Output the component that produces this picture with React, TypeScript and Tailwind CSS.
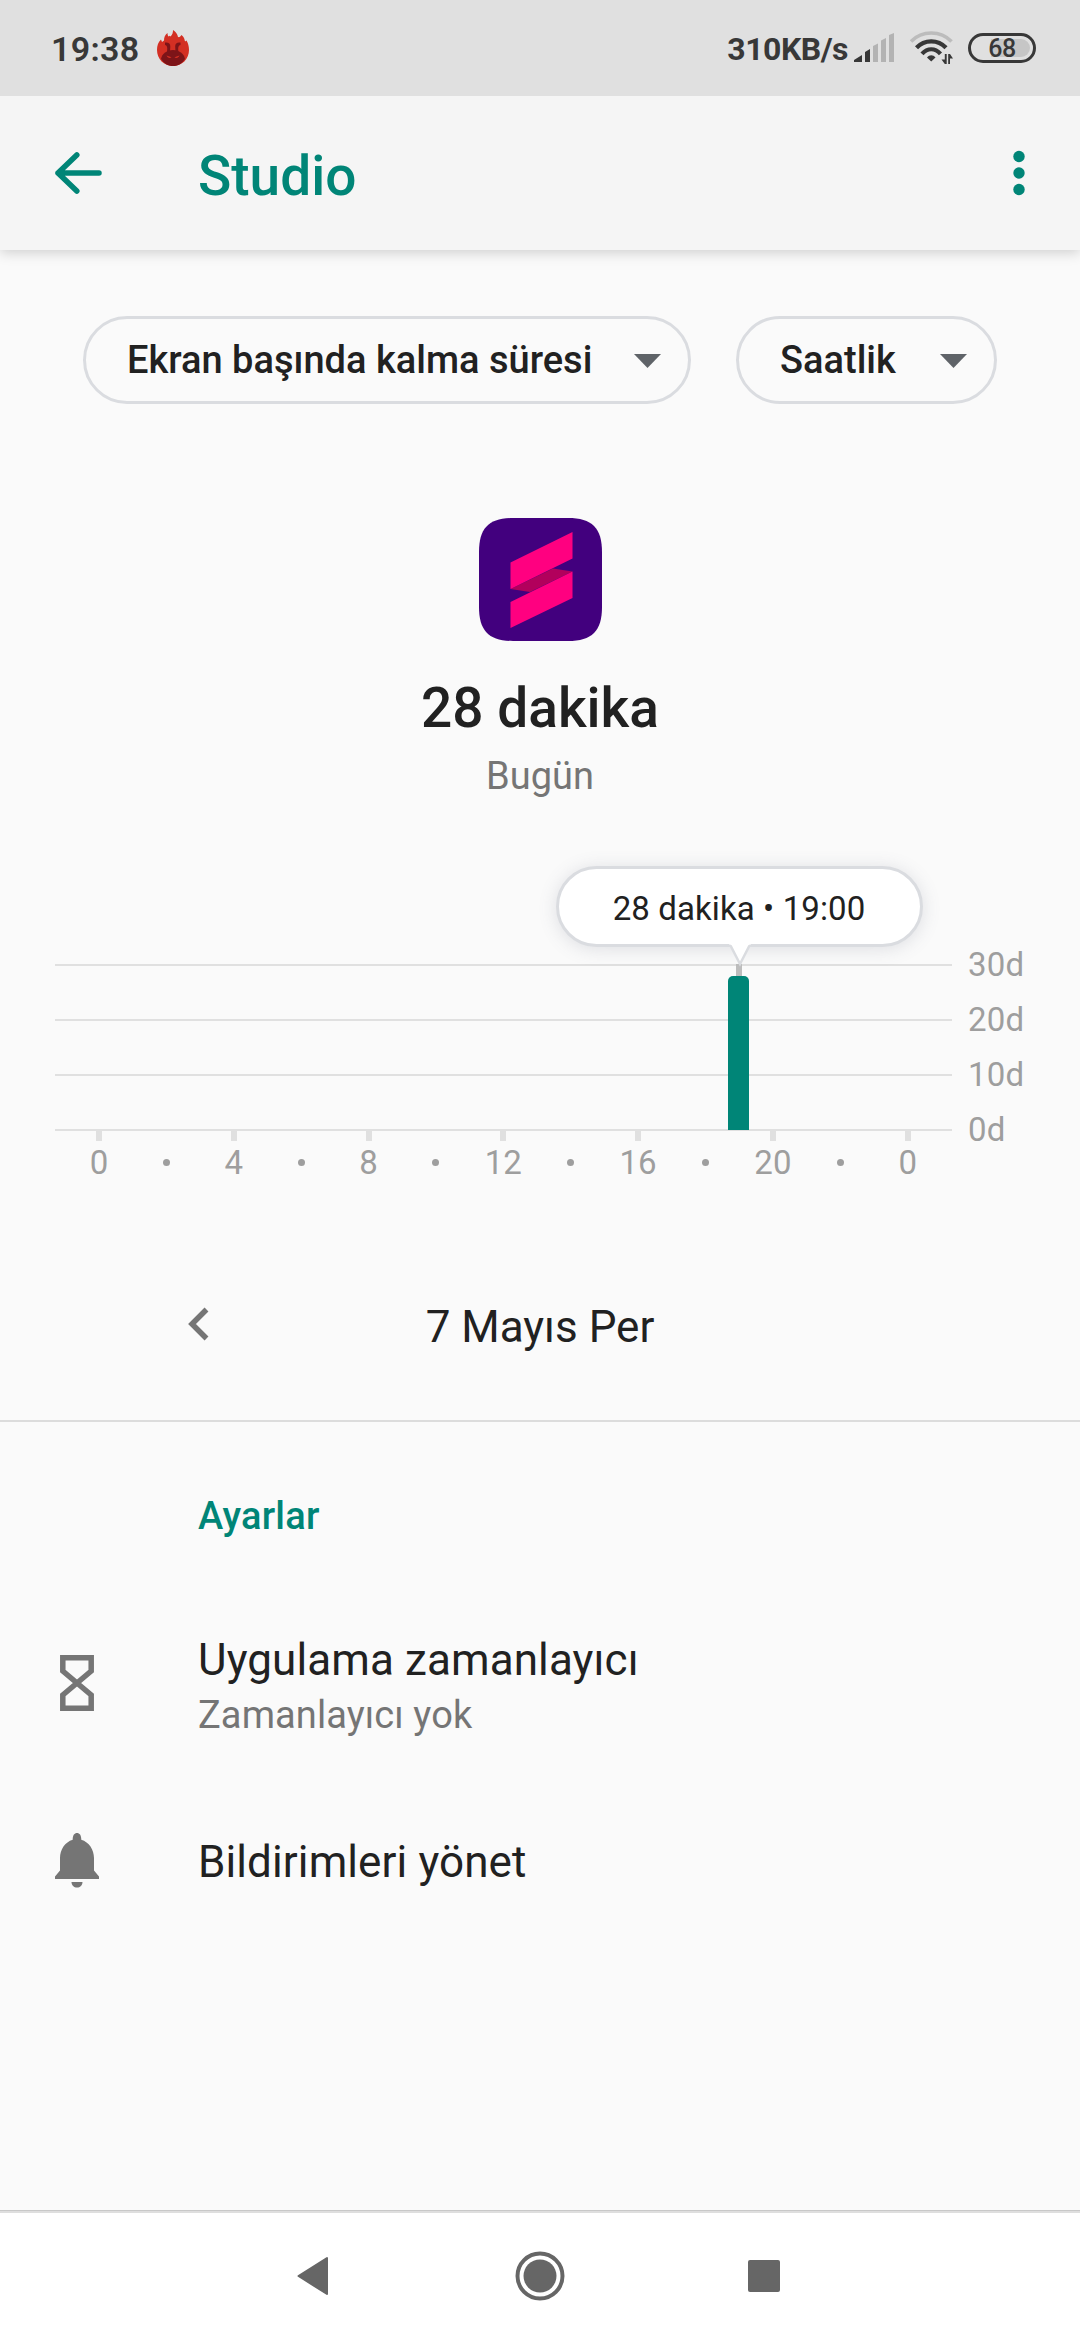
import type { ReactNode } from "react";

function Flame() {
  return (
    <svg className="h-[36px] w-[32px]" viewBox="0 0 32 36">
      <path
        fill="#d32f23"
        d="M16 0C19 2 20.500 4 21 7C22.500 7.500 23.500 6.500 24.500 5C27 7 27.500 9 28 11.500L29.500 10.500C31 13 32 16 32 20C32 29 25 36 16 36C7 36 0 29 0 20C0 16 1 12 4 9.500L5 12L7 10.500C7 7 8 5 10.500 3C10.500 5 11 6.500 12 6.500C12.500 5 13 6.500 13.500 6.500C15.500 4.500 16 2.500 16 0Z"
      />
      <path fill="#7d1418" d="M4 29C5 23.500 10 20 16 20S27 23.500 28 29C25 33.500 21 36 16 36S7 33.500 4 29Z" />
      <path fill="#7d1418" d="M8 12.500C11 12 13.500 13 13.300 16.500L13 22H10C10.500 18 10.500 15.500 8 15Z" />
      <path fill="#7d1418" d="M23.500 12.500C20.500 12 18 13 18.200 16.500L18.500 22H21.500C21 18 21 15.500 23.500 15Z" />
      <path fill="#d32f23" d="M9.500 25.500L14.500 27.300C13 28.500 10.500 28 9.500 25.500ZM22.500 25.500L17.500 27.300C19 28.500 21.500 28 22.500 25.500Z" />
    </svg>
  );
}

function Signal() {
  return (
    <svg className="ml-[6px] h-[30px] w-[40px]" viewBox="0 0 40 30">
      <path fill="#383838" d="M0 29V27L8 22V29ZM11 29V19L16 16V29Z" />
      <path fill="#b3b3b3" d="M19 29V13L24 10.500V29ZM27 29V7.500L32 5V29ZM35 29V2L40 0V29Z" />
    </svg>
  );
}

function Wifi() {
  return (
    <svg className="ml-[16px] h-[34px] w-[43px]" viewBox="0 0 43 34" fill="none">
      <path stroke="#bcbcbc" strokeWidth="3.600" d="M1 10.500C12 -.8 30.500 -.8 41.500 10.500" />
      <path stroke="#383838" strokeWidth="4.200" d="M6.500 16.800C14.500 8.200 28 8.200 36 16.800" />
      <path stroke="#383838" strokeWidth="4.200" d="M12 22.800C17.500 16.700 25 16.700 30.500 22.800" />
      <path fill="#383838" d="M17 26.500C19.500 23.500 23 23.500 25.500 26.500L21.200 30.500Z" />
      <path fill="#383838" d="M34.800 23H36.700V33H34.800L31.500 28.500H34.800ZM38.200 23H40L43 27.500H40V33H38.200Z" />
    </svg>
  );
}

function StatusBar() {
  return (
    <div className="relative z-10 flex h-[96px] items-center bg-[#e0e0e0] pr-[44px] pl-[51px] font-semibold text-[#383838]">
      <span className="pt-[2px] text-[34px] leading-[40px] tracking-[0.3px]">19:38</span>
      <div className="ml-[18px]">
        <Flame />
      </div>
      <div className="flex-1" />
      <span className="pt-[2px] text-[32px] leading-[40px] font-bold tracking-[-0.5px]">310KB/s</span>
      <Signal />
      <Wifi />
      <div className="relative ml-[15px] flex h-[30px] w-[68px] items-center justify-center rounded-full border-[3px] border-[#383838] text-[25px] leading-none font-medium tracking-[-0.5px]">
        <div className="absolute top-[3px] right-[3px] h-[18px] w-[39px] rounded-r-full bg-[#c6c6c6]" />
        <span className="relative">68</span>
      </div>
    </div>
  );
}

function AppBar() {
  return (
    <header className="relative flex h-[154px] items-center bg-[#f5f5f5] pl-[54px] pr-[55px] text-[#008577] shadow-[0_3px_12px_rgba(0,0,0,0.17)]">
      <svg className="h-[44px] w-[48px]" viewBox="0 0 48 44" fill="none" stroke="#008577" strokeWidth="5.500" strokeLinecap="round" strokeLinejoin="round">
        <path d="M45 22H4M22.800 4L4 22L22.800 40" />
      </svg>
      <h1 className="ml-[96px] pt-[6px] text-[55px] leading-[64px] font-medium">Studio</h1>
      <svg className="ml-auto h-[46px] w-[12px]" viewBox="0 0 12 46" fill="#008577">
        <circle cx="6" cy="6.500" r="5.700" />
        <circle cx="6" cy="23" r="5.700" />
        <circle cx="6" cy="39.500" r="5.700" />
      </svg>
    </header>
  );
}

function Chip({ label, className }: { label: string; className: string }) {
  return (
    <button
      className={`flex h-[88px] items-center justify-between rounded-full border-[3px] border-[#dadce0] pr-[27px] pl-[41px] text-[38px] leading-[44px] font-medium text-[#212121] ${className}`}
    >
      <span className="whitespace-nowrap">{label}</span>
      <svg className="mt-[2px] h-[14px] w-[27px]" viewBox="0 0 27 14">
        <path fill="#5f6368" d="M0 0H27L13.500 14Z" />
      </svg>
    </button>
  );
}

function AppSummary() {
  return (
    <section className="flex flex-col items-center pt-[114px]">
      <svg className="h-[123px] w-[123px]" viewBox="0 0 123 123">
        <path
          fill="#42007e"
          d="M34 0H89C113 0 123 10 123 34V89C123 113 113 123 89 123H34C10 123 0 113 0 89V34C0 10 10 0 34 0Z"
        />
        <path fill="#b2005c" d="M31.500 71L74 50.500L93.500 53.500L51 74Z" />
        <path fill="#ff0080" d="M31.500 44.500L93.500 14V40.500L31.500 71ZM31.500 84L93.500 53.500V80L31.500 110Z" />
      </svg>
      <div className="mt-[35px] text-[55px] leading-[64px] font-medium text-[#212121]">28 dakika</div>
      <div className="mt-[14px] text-[38px] leading-[44px] text-[#757575]">Bugün</div>
    </section>
  );
}

const gridLabels = ["30d", "20d", "10d", "0d"];
const hourLabels = ["0", "", "4", "", "8", "", "12", "", "16", "", "20", "", "0"];

function UsageChart() {
  return (
    <section className="relative mt-[140px]">
      <div className="flex flex-col gap-px">
        {gridLabels.map((label) => (
          <div key={label} className="flex h-[54px] items-center pl-[55px]">
            <div className="h-[2px] w-[897px] bg-[#e0e0e0]" />
            <span className="ml-[16px] text-[33px] leading-[40px] tracking-[0.2px] text-[#9e9e9e]">{label}</span>
          </div>
        ))}
      </div>
      <div className="-mt-[26px] flex pl-[65.3px]">
        {hourLabels.map((hour, i) => (
          <div key={i} className="flex w-[67.4px] flex-col items-center text-[33px] leading-[40px] text-[#9e9e9e]">
            <div className={hour ? "h-[10px] w-[6px] bg-[#e0e0e0]" : "h-[10px] w-[6px]"} />
            <div className="mt-[2px] flex h-[40px] items-center justify-center">
              {hour ? <span>{hour}</span> : <div className="mb-[2px] size-[7px] rounded-full bg-[#9e9e9e]" />}
            </div>
          </div>
        ))}
      </div>
      <div className="absolute top-[26px] left-[736px] h-[14px] w-[6px] bg-[#bdbdbd]" />
      <div className="absolute top-[38px] left-[728px] h-[154px] w-[21px] rounded-t-[5px] bg-[#008577]" />
      <div className="absolute -top-[72px] left-[555.5px] flex h-[81px] w-[367px] items-center justify-center rounded-full border-[3px] border-[#dadce0] bg-white pt-[4px] text-[33px] leading-[40px] tracking-[0.1px] whitespace-nowrap text-[#212121] shadow-[0_2px_18px_rgba(95,99,120,0.18)]">
        28 dakika • 19:00
        <svg className="absolute top-[74px] left-[170.500px] h-[24px] w-[22px]" viewBox="0 0 22 24">
          <path fill="#fff" d="M0 0H22V1.500H20.500L11 21L1.500 1.500H0Z" />
          <path fill="none" stroke="#dadce0" strokeWidth="2.500" d="M1.500 2.500L11 21L20.500 2.500" />
        </svg>
      </div>
    </section>
  );
}

function DateNav() {
  return (
    <section className="relative mt-[103px] flex h-[136px] justify-center border-b-2 border-[#dcdcdc] pt-[15px]">
      <svg className="absolute top-[21px] left-[188px] h-[34px] w-[21px]" viewBox="0 0 21 34" fill="none" stroke="#757575" strokeWidth="5.500">
        <path d="M18.500 2.500L4 17L18.500 31.500" />
      </svg>
      <div className="h-[52px] text-[44px] leading-[52px] text-[#212121]">7 Mayıs Per</div>
    </section>
  );
}

function SettingRow({ icon, title, subtitle, className }: { icon: ReactNode; title: string; subtitle?: string; className: string }) {
  return (
    <div className={`flex items-center pl-[55px] ${className}`}>
      <div className="flex w-[44px] justify-center">{icon}</div>
      <div className="ml-[99px]">
        <div className="text-[44px] leading-[52px] tracking-[0.1px] text-[#212121]">{title}</div>
        {subtitle && <div className="mt-[6px] text-[38px] leading-[46px] tracking-[0.1px] text-[#757575]">{subtitle}</div>}
      </div>
    </div>
  );
}

function Settings() {
  return (
    <section>
      <h2 className="mt-[71px] pl-[198px] text-[38px] leading-[46px] font-medium tracking-[0.2px] text-[#008577]">Ayarlar</h2>
      <SettingRow
        className="mt-[95px] h-[104px]"
        title="Uygulama zamanlayıcı"
        subtitle="Zamanlayıcı yok"
        icon={
          <svg className="mt-[-6px] h-[56px] w-[34px]" viewBox="0 0 34 56" fill="none" stroke="#757575" strokeWidth="5.500">
            <path d="M2.800 2.800H31.200V16L17 28L2.800 16ZM17 28L31.200 40V53.200H2.800V40Z" />
          </svg>
        }
      />
      <SettingRow
        className="mt-[93px] h-[62px]"
        title="Bildirimleri yönet"
        icon={
          <svg className="-mt-[4px] h-[55px] w-[44px]" viewBox="0 0 44 55" fill="#757575">
            <path d="M22 0C24.500 0 26.300 2 26.300 6.700C34 9 39 16.500 39 25V37.500L44 43.500V46H0V43.500L5 37.500V25C5 16.500 10 9 17.700 6.700C17.700 2 19.500 0 22 0Z" />
            <path d="M16.500 49H27.500C27.500 52.500 25 54.500 22 54.500S16.500 52.500 16.500 49Z" />
          </svg>
        }
      />
    </section>
  );
}

function NavBar() {
  return (
    <nav className="mt-auto flex h-[130px] flex-col border-t border-[#c8c8c8] bg-white">
      <div className="h-[2px] bg-[#dedede]" />
      <div className="flex h-[126px] items-center justify-between pr-[300px] pl-[297px]">
        <svg className="h-[42px] w-[32px]" viewBox="0 0 32 42">
          <path fill="#666" stroke="#666" strokeWidth="2" strokeLinejoin="round" d="M1.500 21L30 3V39Z" />
        </svg>
        <svg className="ml-[3px] h-[50px] w-[50px]" viewBox="0 0 50 50">
          <circle cx="25" cy="25" r="22.500" fill="none" stroke="#666" strokeWidth="4" />
          <circle cx="25" cy="25" r="16.500" fill="#666" />
        </svg>
        <div className="h-[32px] w-[32px] rounded-[2px] bg-[#666]" />
      </div>
    </nav>
  );
}

export default function App() {
  return (
    <div className="flex h-[2340px] w-[1080px] flex-col overflow-hidden bg-[#fafafa] font-['Roboto',sans-serif]">
      <StatusBar />
      <AppBar />
      <div className="flex justify-center gap-[45px] pt-[66px]">
        <Chip className="w-[608px]" label="Ekran başında kalma süresi" />
        <Chip className="w-[261px]" label="Saatlik" />
      </div>
      <AppSummary />
      <UsageChart />
      <DateNav />
      <Settings />
      <NavBar />
    </div>
  );
}
